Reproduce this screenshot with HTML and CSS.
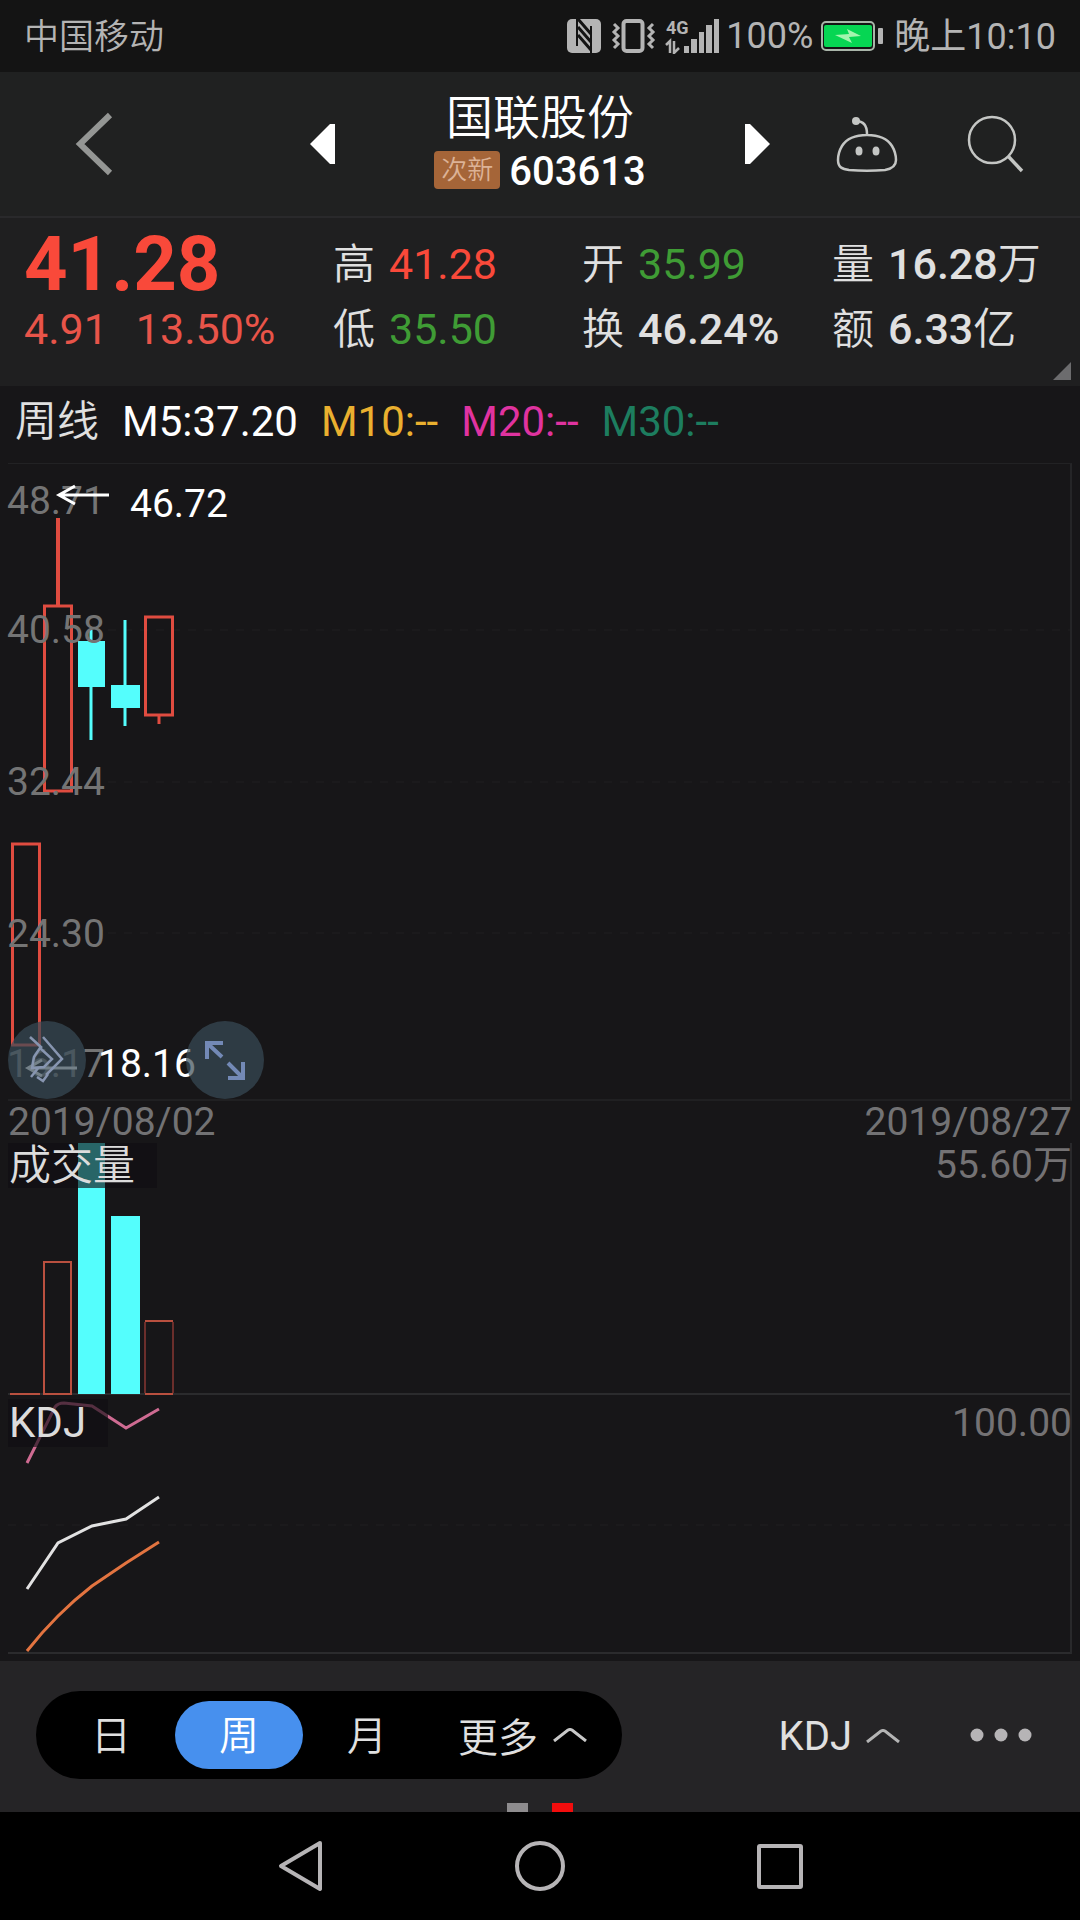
FILE: index.html
```html
<!DOCTYPE html>
<html lang="zh-CN">
<head>
<meta charset="utf-8">
<meta name="viewport" content="width=device-width, initial-scale=1">
<title>国联股份 603613</title>
<link rel="stylesheet" href="styles.css">
</head>
<body>
<div class="app">
  <div class="status">
    <span class="carrier">中国移动</span>
    <div class="status-right">
      <svg class="status-icons" width="154" height="36" viewBox="567 18 154 36" aria-hidden="true">
        <rect x="568" y="19" width="34" height="34" rx="5" fill="#b4b4b4"/>
        <path d="M578 18V46M592 26V54" fill="none" stroke="#141414" stroke-width="2"/>
        <path d="M579 19L592 34M579 27L592 42M579 35L592 50" fill="none" stroke="#141414" stroke-width="3"/>
        <rect x="624.500" y="21" width="19" height="30" rx="3" fill="none" stroke="#b4b4b4" stroke-width="4"/>
        <path d="M615 24l4 4-4 4 4 4-4 4 4 4-4 4M654 24l-4 4 4 4-4 4 4 4-4 4 4 4" fill="none" stroke="#b4b4b4" stroke-width="3"/>
        <text x="667" y="34" class="net">4G</text>
        <path d="M667 45l4-4v12M675 41v12l5-5" fill="none" stroke="#b4b4b4" stroke-width="2.500"/>
        <path d="M685 46h5v7h-5zM692 39h6v14h-6zM700 32h5v21h-5zM707 25h6v28h-6zM715 19h5v34h-5z" fill="#b4b4b4"/>
      </svg>
      <span class="percent">100%</span>
      <svg class="battery" width="63" height="30" viewBox="822 21 63 30" aria-hidden="true">
        <rect x="823" y="22" width="52" height="28" rx="4" fill="none" stroke="#a9b5a9" stroke-width="2"/>
        <rect x="825" y="25" width="48" height="22" rx="2" fill="#06d653"/>
        <path d="M836 35l14-1-2-5 14 7-12 1 3 6z" fill="#a4f5ae"/>
        <rect x="879" y="28" width="5" height="16" rx="1" fill="#b4b4b4"/>
      </svg>
      <span class="clock">晚上10:10</span>
    </div>
  </div>

  <header class="header">
    <div class="header-left">
      <button class="plain" aria-label="返回"><svg width="42" height="66" viewBox="74 111 42 66"><path d="M110 115L80 144l30 29" fill="none" stroke="#949694" stroke-width="6"/></svg></button>
    </div>
    <div class="switcher">
      <button class="plain" aria-label="上一只"><svg width="25" height="40" viewBox="0 0 25 40"><path d="M25 0H20L0 20 20 40H25Z" fill="#fff"/></svg></button>
      <div class="title">
        <h1 class="name">国联股份</h1>
        <div class="code-row"><span class="badge">次新</span><span class="code">603613</span></div>
      </div>
      <button class="plain" aria-label="下一只"><svg width="25" height="40" viewBox="0 0 25 40"><path d="M0 0H5L25 20 5 40H0Z" fill="#fff"/></svg></button>
    </div>
    <div class="header-right">
      <button class="plain" aria-label="智能助手"><svg width="64" height="56" viewBox="835 116 64 56"><path d="M867 135c-12 0-20 3-25 11-3 5-4 10-4 14 0 8 5 9 11 10 12 1 24 1 36 0 6-1 11-3 11-10 0-4-1-9-4-14-5-8-13-11-25-11zM856 121c8 0 11 5 11 13" fill="none" stroke="#c4c6c4" stroke-width="2.500"/><circle cx="856" cy="121" r="4" fill="#c4c6c4"/><ellipse cx="859" cy="151" rx="3.500" ry="4.500" fill="#c4c6c4"/><ellipse cx="876" cy="151" rx="3.500" ry="4.500" fill="#c4c6c4"/></svg></button>
      <button class="plain" aria-label="搜索"><svg width="58" height="58" viewBox="967 114 58 58"><circle cx="992" cy="139" r="23" fill="none" stroke="#c4c6c4" stroke-width="2.500"/><path d="M1008 155l14 15" stroke="#c4c6c4" stroke-width="3.500"/></svg></button>
    </div>
  </header>

  <section class="quote">
    <div class="last">
      <strong class="price up">41.28</strong>
      <div class="change"><span>4.91</span><span>13.50%</span></div>
    </div>
    <dl class="stats">
      <div class="stat"><dt>高</dt><dd class="up">41.28</dd></div>
      <div class="stat"><dt>开</dt><dd class="down">35.99</dd></div>
      <div class="stat"><dt>量</dt><dd>16.28<span class="unit">万</span></dd></div>
      <div class="stat"><dt>低</dt><dd class="down">35.50</dd></div>
      <div class="stat"><dt>换</dt><dd>46.24%</dd></div>
      <div class="stat"><dt>额</dt><dd>6.33<span class="unit">亿</span></dd></div>
    </dl>
    <span class="expand"></span>
  </section>

  <div class="legend">
    <span class="kind">周线</span>
    <span class="m5">M5:37.20</span>
    <span class="m10">M10:--</span>
    <span class="m20">M20:--</span>
    <span class="m30">M30:--</span>
  </div>

  <main class="charts">
    <div class="panel candles">
      <svg class="plot" height="635">
        <g class="grid-line"><line x1="100" x2="100%" y1="166" y2="166"/><line x1="100" x2="100%" y1="318" y2="318"/><line x1="100" x2="100%" y1="469" y2="469"/></g>
        <g transform="translate(-8 -464)">
          <g fill="none" stroke="#e04c40" stroke-width="3">
            <path d="M12.500 844h27v201h-27zM44.500 606h27v185h-27zM145.500 617h27v98h-27zM159 716v8"/>
            <path d="M58 518v87" stroke-width="4"/>
          </g>
          <path d="M91 630v110M125 620v106" stroke="#54fefd" stroke-width="3"/>
          <path d="M78 641h27v46H78zM111 685h29v23h-29z" fill="#54fefd"/>
        </g>
        <g class="axis"><text x="-1" y="50">48.71</text><text x="-1" y="179">40.58</text><text x="-1" y="331">32.44</text><text x="-1" y="483">24.30</text><text x="-1" y="613">16.17</text></g>
        <g fill="none" stroke="#fff" stroke-width="3"><path d="M101 31H51M67 22L51 31l16 9"/><path d="M69 604H20M34 596l-14 8 14 8"/></g>
        <g class="mark"><text x="122" y="53">46.72</text><text x="90" y="613">18.16</text></g>
      </svg>
      <button class="float draw" aria-label="画线"><svg width="78" height="78" viewBox="8 1022 78 78"><path d="M30 1038l12 11M43 1038l19 22-16 16M40 1049l12 11-8 8-12 1 2-11zM31 1078l8-10M37 1078l6 4 5-7" fill="none" stroke="#8795b0" stroke-width="2.500"/></svg></button>
      <button class="float full" aria-label="全屏"><svg width="78" height="78" viewBox="186 1022 78 78"><path d="M223 1044H207V1060M207 1044L222 1058M228 1079H243V1063M243 1079L228 1064" fill="none" stroke="#7389b6" stroke-width="4"/></svg></button>
    </div>
    <div class="dates"><span>2019/08/02</span><span>2019/08/27</span></div>
    <div class="panel volume">
      <svg class="plot" height="250">
        <g transform="translate(-8 -1143)">
          <path d="M78 1143h27v251H78zM111 1216h29v178h-29z" fill="#54fefd"/>
          <path d="M10 1394h30M44 1262h27v132H44zM145 1321h28M145 1394h28" fill="none" stroke="#b9503f" stroke-width="2"/>
          <path d="M145 1322v71M173 1322v71" stroke="#6b2e2b" stroke-width="2"/>
        </g>
      </svg>
      <span class="tag tag-volume">成交量</span>
      <span class="scale">55.60万</span>
    </div>
    <div class="panel kdj">
      <svg class="plot" height="257">
        <g class="grid-line"><line x1="0" x2="100%" y1="130" y2="130"/></g>
        <g transform="translate(-8 -1396)" fill="none" stroke-width="3">
          <path d="M27 1464L55 1408q3-4 9-4l28 3 34 22 33-19" stroke="#cf6b92"/>
          <path d="M27 1590l31-46 34-17 34-7 33-22" stroke="#e2e2e2"/>
          <path d="M27 1652q15-19 31-35t34-30l34-23 33-21" stroke="#e37440"/>
        </g>
      </svg>
      <span class="tag tag-kdj">KDJ</span>
      <span class="scale">100.00</span>
    </div>
  </main>

  <div class="toolbar">
    <div class="periods">
      <button class="period">日</button>
      <button class="period active" aria-pressed="true">周</button>
      <button class="period">月</button>
      <button class="more">更多<svg width="34" height="14" viewBox="0 0 34 14"><path d="M1 13L15 2q2-1 4 0L33 13" fill="none" stroke="#c8c8c8" stroke-width="3"/></svg></button>
    </div>
    <div class="tools">
      <button class="indicator">KDJ<svg width="34" height="14" viewBox="0 0 34 14"><path d="M1 13L15 2q2-1 4 0L33 13" fill="none" stroke="#b4b4b4" stroke-width="3"/></svg></button>
      <button class="plain" aria-label="更多操作"><svg width="62" height="14" viewBox="0 0 62 14"><g fill="#b6b4b6"><circle cx="7" cy="7" r="6.500"/><circle cx="31" cy="7" r="6.500"/><circle cx="55" cy="7" r="6.500"/></g></svg></button>
    </div>
    <div class="pager"><i></i><i class="on"></i></div>
  </div>

  <nav class="nav">
    <button class="plain" aria-label="后退"><svg width="50" height="52" viewBox="274 1839 50 52"><path d="M319 1842L280 1865l39 23z" fill="none" stroke="#b6b4b6" stroke-width="4" stroke-linejoin="round"/></svg></button>
    <button class="plain" aria-label="主页"><svg width="50" height="52" viewBox="0 0 50 52"><circle cx="25" cy="26" r="23" fill="none" stroke="#b6b4b6" stroke-width="4"/></svg></button>
    <button class="plain" aria-label="最近任务"><svg width="50" height="52" viewBox="0 0 50 52"><rect x="4" y="6" width="42" height="41" rx="1" fill="none" stroke="#b6b4b6" stroke-width="4"/></svg></button>
  </nav>
</div>
</body>
</html>
```
FILE: styles.css
```css
* { box-sizing: border-box; }

body {
  margin: 0;
  background: #000;
  color: #e0e0e0;
  font-family: Roboto, "Noto Sans CJK SC", sans-serif;
  font-size: 42px;
}

button {
  margin: 0;
  padding: 0;
  border: 0;
  background: none;
  color: inherit;
  font: inherit;
}

svg { display: block; }

.plain { display: flex; }

.app {
  display: flex;
  flex-direction: column;
  min-height: 100vh;
}

/* Status bar */
.status {
  display: flex;
  justify-content: space-between;
  align-items: center;
  height: 72px;
  padding: 0 24px;
  background: #141414;
  color: #b4b4b4;
  font-size: 36px;
  line-height: 48px;
}
.carrier { padding-top: 3px; font-size: 35px; font-weight: 350; }
.status-right { display: flex; align-items: center; }
.net { font-size: 18px; font-weight: 700; fill: #b4b4b4; }
.percent { margin: 0 8px 0 6px; }
.clock { margin-left: 10px; padding-top: 2px; }

/* Header */
.header {
  display: grid;
  grid-template-columns: 1fr 460px 1fr;
  align-items: center;
  height: 146px;
  border-bottom: 2px solid #29292b;
  background: #202121;
}
.header-left { padding-left: 74px; }
.switcher {
  display: flex;
  justify-content: space-between;
  align-items: center;
}
.header-right {
  display: flex;
  justify-content: flex-end;
  align-items: center;
  gap: 68px;
  padding-right: 55px;
}
.title {
  display: flex;
  flex-direction: column;
  align-items: center;
  gap: 2px;
  padding-bottom: 2px;
}
.name {
  margin: 0;
  color: #fff;
  font-size: 47px;
  font-weight: 350;
  line-height: 56px;
}
.code-row { display: flex; align-items: flex-start; gap: 9px; }
.badge {
  height: 38px;
  margin-top: 3px;
  padding: 0 7px;
  border-radius: 4px;
  background: #a56538;
  color: #dcb296;
  font-size: 26px;
  font-weight: 350;
  line-height: 38px;
}
.code {
  color: #fff;
  font-size: 40px;
  font-weight: 500;
  line-height: 48px;
}

/* Quote */
.quote {
  position: relative;
  display: grid;
  grid-template-columns: 309px 1fr;
  height: 168px;
  padding: 14px 0 0 24px;
  background: #1f1f20;
}
.price {
  display: block;
  font-size: 76px;
  font-weight: 700;
  line-height: 64px;
}
.up { color: #f9493a; }
.down { color: #3f9c35; }
.change {
  display: flex;
  gap: 28px;
  color: #e85449;
  font-size: 43px;
  line-height: 66px;
}
.stats {
  display: grid;
  grid-template-columns: 249px 250px 1fr;
  grid-auto-rows: 65px;
  margin: 0;
  line-height: 65px;
}
.stat { display: flex; gap: 14px; white-space: nowrap; }
.stat dt { font-weight: 350; }
.stat dd { margin: 0; font-size: 43px; font-weight: 500; }
.stat .up, .stat .down { font-weight: 400; }
.unit { font-weight: 350; }
.expand {
  position: absolute;
  right: 9px;
  bottom: 6px;
  border: 9px solid;
  border-color: transparent #6c6c6e #6c6c6e transparent;
}

/* Moving averages */
.legend {
  display: flex;
  gap: 23px;
  height: 77px;
  padding: 0 15px;
  background: #171618;
  line-height: 72px;
}
.kind { font-weight: 350; }
.m5 { color: #fff; }
.m10 { color: #eab02f; }
.m20 { color: #e033a0; }
.m30 { color: #1d7d5f; }

/* Charts */
.charts {
  flex: 1;
  padding: 0 8px;
  background: #171618;
  font-size: 39px;
}
.panel { position: relative; }
.plot { width: 100%; overflow: visible; }
.candles {
  border-top: 1px solid #222224;
  border-right: 2px solid #252527;
  border-bottom: 2px solid #202022;
}
.volume, .kdj {
  border-right: 2px solid #29292b;
  border-bottom: 2px solid #2b2b2d;
}
.grid-line { stroke: #1b1a1c; stroke-width: 2; stroke-dasharray: 8 8; }
.axis { fill: #747474; }
.mark { fill: #fff; }
.dates {
  display: flex;
  justify-content: space-between;
  color: #727274;
  line-height: 42px;
}
.tag {
  position: absolute;
  top: 0;
  left: 0;
  padding: 0 22px 0 1px;
  background: rgba(16, 14, 18, .64);
  color: #dcdcdc;
  font-size: 42px;
  line-height: 45px;
}
.tag-volume { font-weight: 350; }
.tag-kdj { top: 4px; line-height: 48px; }
.scale {
  position: absolute;
  top: 0;
  right: -2px;
  color: #747274;
  line-height: 45px;
}
.kdj .scale { top: 6px; }
.float {
  position: absolute;
  bottom: 0;
  width: 78px;
  height: 78px;
  border-radius: 50%;
  background: rgba(57, 75, 87, .7);
}
.draw { left: 0; }
.full { left: 178px; }

/* Toolbar */
.toolbar {
  position: relative;
  display: flex;
  justify-content: space-between;
  align-items: flex-start;
  height: 151px;
  padding: 30px 48px 0 36px;
  background: #252426;
  font-size: 40px;
}
.periods {
  display: flex;
  align-items: center;
  height: 88px;
  padding-left: 11px;
  border-radius: 44px;
  background: #000;
  font-weight: 350;
}
.period {
  width: 128px;
  height: 68px;
  padding-top: 4px;
  border-radius: 34px;
  line-height: 64px;
}
.period.active { background: #4790ee; color: #fff; }
.more, .indicator { display: flex; align-items: center; }
.more { gap: 15px; padding: 0 35px 0 27px; }
.tools {
  display: flex;
  align-items: center;
  gap: 70px;
  height: 88px;
}
.indicator { gap: 14px; padding-top: 2px; }
.pager {
  position: absolute;
  right: 0;
  bottom: 0;
  left: 0;
  display: flex;
  justify-content: center;
  gap: 24px;
}
.pager i { width: 21px; height: 9px; background: #8e8c8e; }
.pager .on { background: #f20d0d; }

/* System navigation */
.nav {
  display: flex;
  justify-content: center;
  align-items: center;
  gap: 190px;
  height: 108px;
  background: #000;
}
```
